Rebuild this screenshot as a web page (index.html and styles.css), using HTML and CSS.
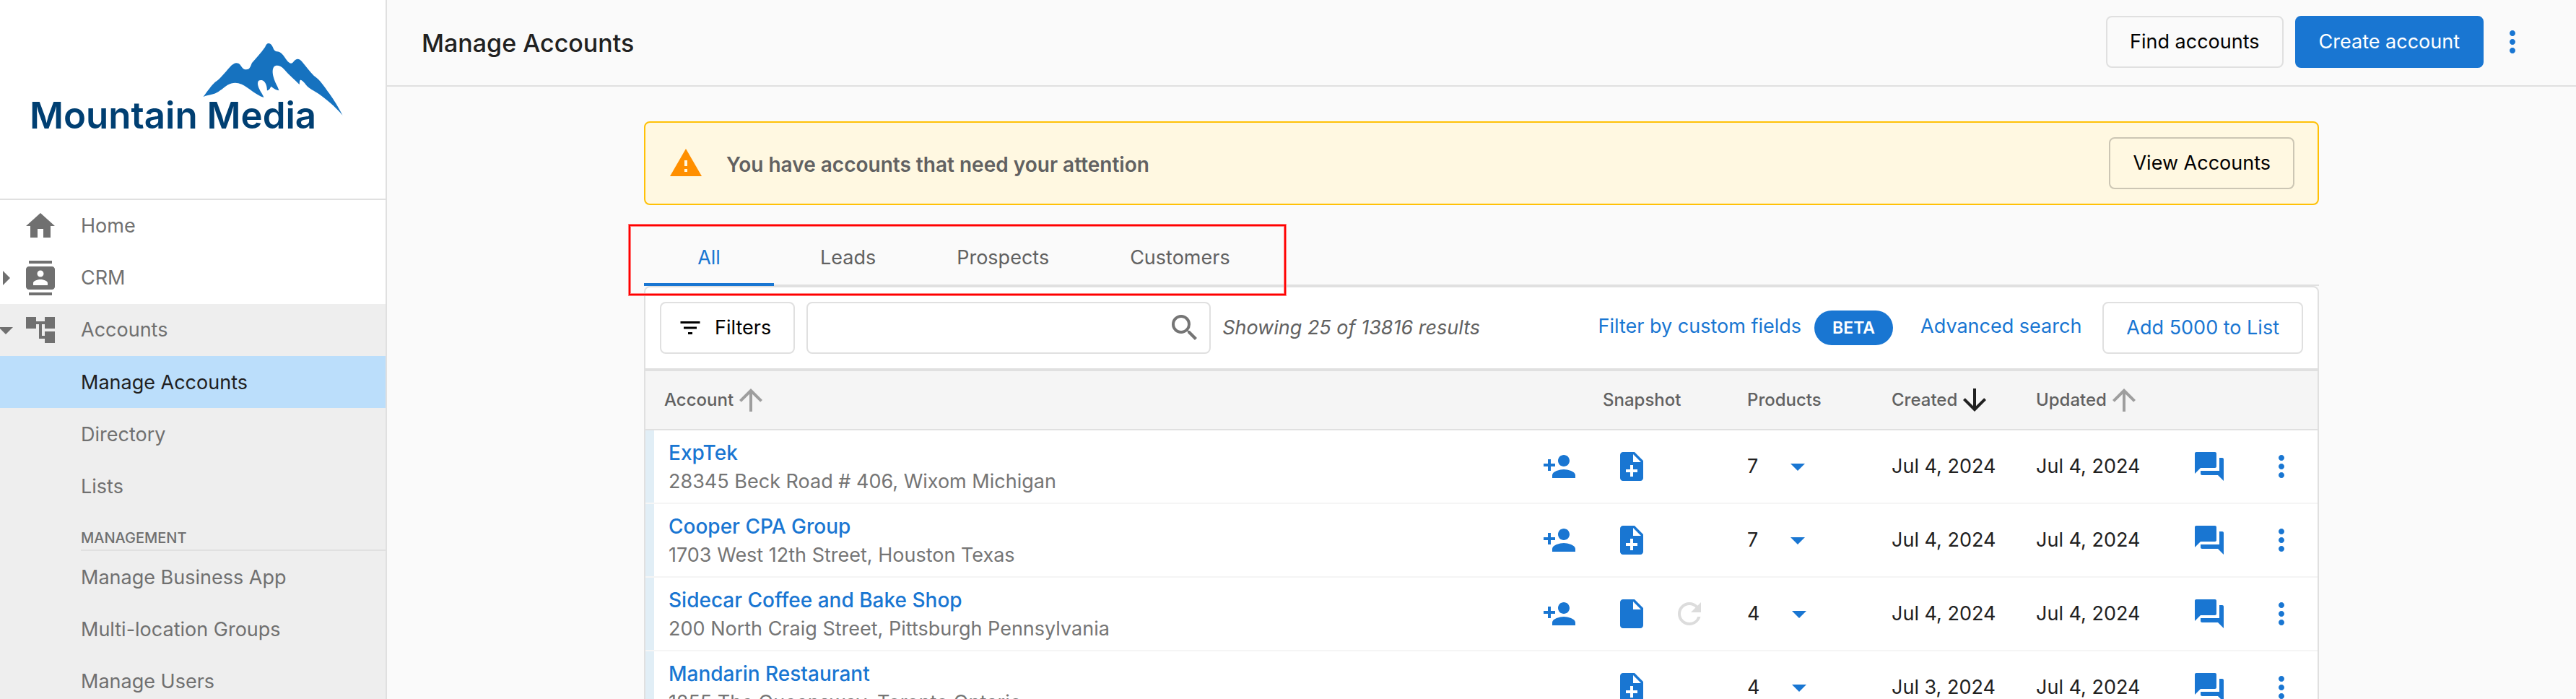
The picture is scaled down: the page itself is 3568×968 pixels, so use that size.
FILE: index.html
```html
<!DOCTYPE html>
<html lang="en">
<head>
<meta charset="utf-8">
<title>Manage Accounts</title>
<link rel="stylesheet" href="styles.css">
</head>
<body>
<svg class="sprite" aria-hidden="true">
  <symbol id="i-home" viewBox="0 0 24 24"><path d="M10 20v-6h4v6h5v-8h3L12 3 2 12h3v8z"/></symbol>
  <symbol id="i-contacts" viewBox="0 0 24 24"><path d="M20 0H4v2h16V0zM4 24h16v-2H4v2zM20 4H4c-1.100 0-2 .9-2 2v12c0 1.100.9 2 2 2h16c1.100 0 2-.9 2-2V6c0-1.100-.9-2-2-2zm-8 2.750c1.240 0 2.250 1.010 2.250 2.250s-1.010 2.250-2.250 2.250S9.750 10.240 9.750 9 10.760 6.750 12 6.750zM17 17H7v-1.500c0-1.670 3.330-2.500 5-2.500s5 .83 5 2.500V17z"/></symbol>
  <symbol id="i-tree" viewBox="0 0 24 24"><path d="M22 11V3h-7v3H9V3H2v8h7V8h2v10h4v3h7v-8h-7v3h-2V8h2v3z"/></symbol>
  <symbol id="i-right" viewBox="0 0 24 24"><path d="M10 17l5-5-5-5z"/></symbol>
  <symbol id="i-down" viewBox="0 0 24 24"><path d="M7 10l5 5 5-5z"/></symbol>
  <symbol id="i-more" viewBox="0 0 24 24"><path d="M12 8c1.100 0 2-.9 2-2s-.9-2-2-2-2 .9-2 2 .9 2 2 2zm0 2c-1.100 0-2 .9-2 2s.9 2 2 2 2-.9 2-2-.9-2-2-2zm0 6c-1.100 0-2 .9-2 2s.9 2 2 2 2-.9 2-2-.9-2-2-2z"/></symbol>
  <symbol id="i-warning" viewBox="0 0 24 24"><path d="M1 21h22L12 2 1 21z"/><path fill="#fff8e1" d="M13 18h-2v-2h2zM13 14h-2v-4h2z"/></symbol>
  <symbol id="i-filter" viewBox="0 0 24 24"><path d="M10 18h4v-2h-4v2zM3 6v2h18V6H3zm3 7h12v-2H6v2z"/></symbol>
  <symbol id="i-search" viewBox="0 0 24 24"><path d="M15.500 14h-.79l-.28-.27A6.471 6.471 0 0 0 16 9.500 6.500 6.500 0 1 0 9.500 16c1.610 0 3.090-.59 4.230-1.570l.27.28v.79l5 4.990L20.490 19l-4.990-5zm-6 0C7.010 14 5 11.990 5 9.500S7.010 5 9.500 5 14 7.010 14 9.500 11.990 14 9.500 14z"/></symbol>
  <symbol id="i-arrow-up" viewBox="0 0 24 24"><path d="M4 12l1.410 1.410L11 7.830V20h2V7.830l5.580 5.590L20 12l-8-8-8 8z"/></symbol>
  <symbol id="i-arrow-down" viewBox="0 0 24 24"><path d="M20 12l-1.410-1.410L13 16.170V4h-2v12.170l-5.580-5.590L4 12l8 8 8-8z"/></symbol>
  <symbol id="i-person-add" viewBox="0 0 24 24"><path d="M15 12c2.210 0 4-1.790 4-4s-1.790-4-4-4-4 1.790-4 4 1.790 4 4 4zm-9-2V7H4v3H1v2h3v3h2v-3h3v-2H6zm9 4c-2.670 0-8 1.340-8 4v2h16v-2c0-2.660-5.330-4-8-4z"/></symbol>
  <symbol id="i-note-add" viewBox="0 0 24 24"><path d="M14 2H6c-1.100 0-1.990.9-1.990 2L4 20c0 1.100.89 2 1.990 2H18c1.100 0 2-.9 2-2V8l-6-6zm2 14h-3v3h-2v-3H8v-2h3v-3h2v3h3v2zm-3-7V3.500L18.500 9H13z"/></symbol>
  <symbol id="i-file" viewBox="0 0 24 24"><path d="M6 2c-1.100 0-1.990.9-1.990 2L4 20c0 1.100.89 2 1.990 2H18c1.100 0 2-.9 2-2V8l-6-6H6zm7 7V3.500L18.500 9H13z"/></symbol>
  <symbol id="i-refresh" viewBox="0 0 24 24"><path d="M17.650 6.350A7.958 7.958 0 0 0 12 4c-4.420 0-7.990 3.580-7.990 8s3.570 8 7.990 8c3.730 0 6.840-2.550 7.730-6h-2.080A5.990 5.990 0 0 1 12 18c-3.310 0-6-2.690-6-6s2.690-6 6-6c1.660 0 3.140.69 4.220 1.780L13 11h7V4l-2.350 2.350z"/></symbol>
  <symbol id="i-chat" viewBox="0 0 24 24"><path d="M21 6h-2v9H6v2c0 .55.45 1 1 1h11l4 4V7c0-.55-.45-1-1-1zm-4 6V3c0-.55-.45-1-1-1H3c-.55 0-1 .45-1 1v14l4-4h10c.55 0 1-.45 1-1z"/></symbol>
</svg>

<div class="app">
  <aside class="sidebar">
    <div class="brand">
      <svg class="brand-logo" viewBox="0 0 534 275" role="img" aria-label="Mountain Media">
        <g transform="scale(.3444 .3333)" fill="#1672bf">
          <path d="M818 401C835 378 850 355 865 341C888 326 905 300 925 278C940 262 953 256 966 269C974 282 980 289 990 289C1004 289 1007 279 1013 262C1030 241 1048 223 1066 196C1072 180 1081 175 1092 187C1100 198 1100 212 1112 214C1132 214 1140 232 1153 250C1164 265 1174 268 1181 256C1190 243 1202 241 1213 254C1230 274 1246 298 1262 314C1288 332 1305 361 1324 388C1345 418 1362 448 1378 479C1346 441 1311 412 1283 391C1262 376 1245 371 1230 352C1219 337 1208 328 1206 335C1204 342 1205 346 1204 351C1185 331 1163 312 1142 287C1129 272 1113 268 1103 276C1092 288 1096 314 1107 341C1113 354 1119 365 1122 376C1112 374 1103 370 1090 359C1085 370 1082 374 1074 376C1074 353 1066 336 1052 333C1037 331 1035 342 1038 356C1043 376 1056 389 1061 405C1028 394 1002 365 972 350C952 341 934 342 915 353C892 370 878 384 857 391C842 396 829 396 818 402Z"/>
        </g>
        <text class="brand-text" x="41" y="178">Mountain Media</text>
      </svg>
    </div>
    <nav class="nav">
      <a class="nav-item" href="#"><span class="nav-toggle"></span><svg class="icon"><use href="#i-home"/></svg><span>Home</span></a>
      <a class="nav-item" href="#"><svg class="icon nav-toggle"><use href="#i-right"/></svg><svg class="icon"><use href="#i-contacts"/></svg><span>CRM</span></a>
      <div class="nav-group">
        <a class="nav-item" href="#"><svg class="icon nav-toggle"><use href="#i-down"/></svg><svg class="icon"><use href="#i-tree"/></svg><span>Accounts</span></a>
        <a class="nav-item nav-sub active" href="#">Manage Accounts</a>
        <a class="nav-item nav-sub" href="#">Directory</a>
        <a class="nav-item nav-sub" href="#">Lists</a>
        <h2 class="nav-heading">MANAGEMENT</h2>
        <a class="nav-item nav-sub" href="#">Manage Business App</a>
        <a class="nav-item nav-sub" href="#">Multi-location Groups</a>
        <a class="nav-item nav-sub" href="#">Manage Users</a>
      </div>
    </nav>
  </aside>

  <div class="page">
    <header class="topbar">
      <h1 class="title">Manage Accounts</h1>
      <button class="btn" type="button">Find accounts</button>
      <button class="btn btn-primary" type="button">Create account</button>
      <button class="icon-btn" type="button" aria-label="More actions"><svg class="icon"><use href="#i-more"/></svg></button>
    </header>

    <main class="content">
      <section class="alert">
        <svg class="icon alert-icon"><use href="#i-warning"/></svg>
        <p class="alert-text">You have accounts that need your attention</p>
        <button class="btn" type="button">View Accounts</button>
      </section>

      <div class="tabs" role="tablist">
        <button class="tab selected" type="button" role="tab" aria-selected="true">All</button>
        <button class="tab" type="button" role="tab">Leads</button>
        <button class="tab" type="button" role="tab">Prospects</button>
        <button class="tab" type="button" role="tab">Customers</button>
        <div class="highlight"></div>
      </div>

      <section class="card">
        <div class="toolbar">
          <button class="btn btn-filter" type="button"><svg class="icon"><use href="#i-filter"/></svg>Filters</button>
          <label class="search">
            <input type="text" aria-label="Search accounts">
            <svg class="icon"><use href="#i-search"/></svg>
          </label>
          <em class="count">Showing 25 of 13816 results</em>
          <div class="links">
            <a href="#">Filter by custom fields</a>
            <span class="badge">BETA</span>
            <a href="#">Advanced search</a>
          </div>
          <button class="btn btn-link" type="button">Add 5000 to List</button>
        </div>
        <table class="accounts">
          <colgroup><col><col class="c-icon"><col class="c-data"><col class="c-data"><col class="c-data"><col class="c-data"><col class="c-icon"><col class="c-more"></colgroup>
          <thead>
            <tr>
              <th><span class="sort">Account<svg class="icon"><use href="#i-arrow-up"/></svg></span></th>
              <th></th>
              <th>Snapshot</th>
              <th>Products</th>
              <th><span class="sort sorted">Created<svg class="icon"><use href="#i-arrow-down"/></svg></span></th>
              <th><span class="sort">Updated<svg class="icon"><use href="#i-arrow-up"/></svg></span></th>
              <th></th>
              <th></th>
            </tr>
          </thead>
          <tbody>
            <tr>
              <td><div class="account"><a href="#">ExpTek</a><span>28345 Beck Road # 406, Wixom Michigan</span></div></td>
              <td><button class="icon-btn" type="button" aria-label="Add user"><svg class="icon"><use href="#i-person-add"/></svg></button></td>
              <td><button class="icon-btn" type="button" aria-label="Create snapshot"><svg class="icon"><use href="#i-note-add"/></svg></button></td>
              <td><button class="products" type="button">7<svg class="icon"><use href="#i-down"/></svg></button></td>
              <td>Jul 4, 2024</td>
              <td>Jul 4, 2024</td>
              <td><button class="icon-btn" type="button" aria-label="Messages"><svg class="icon"><use href="#i-chat"/></svg></button></td>
              <td><button class="icon-btn" type="button" aria-label="More"><svg class="icon"><use href="#i-more"/></svg></button></td>
            </tr>
            <tr>
              <td><div class="account"><a href="#">Cooper CPA Group</a><span>1703 West 12th Street, Houston Texas</span></div></td>
              <td><button class="icon-btn" type="button" aria-label="Add user"><svg class="icon"><use href="#i-person-add"/></svg></button></td>
              <td><button class="icon-btn" type="button" aria-label="Create snapshot"><svg class="icon"><use href="#i-note-add"/></svg></button></td>
              <td><button class="products" type="button">7<svg class="icon"><use href="#i-down"/></svg></button></td>
              <td>Jul 4, 2024</td>
              <td>Jul 4, 2024</td>
              <td><button class="icon-btn" type="button" aria-label="Messages"><svg class="icon"><use href="#i-chat"/></svg></button></td>
              <td><button class="icon-btn" type="button" aria-label="More"><svg class="icon"><use href="#i-more"/></svg></button></td>
            </tr>
            <tr>
              <td><div class="account"><a href="#">Sidecar Coffee and Bake Shop</a><span>200 North Craig Street, Pittsburgh Pennsylvania</span></div></td>
              <td><button class="icon-btn" type="button" aria-label="Add user"><svg class="icon"><use href="#i-person-add"/></svg></button></td>
              <td><div class="snapshot"><button class="icon-btn" type="button" aria-label="View snapshot"><svg class="icon"><use href="#i-file"/></svg></button><button class="icon-btn muted" type="button" aria-label="Refresh snapshot"><svg class="icon"><use href="#i-refresh"/></svg></button></div></td>
              <td><button class="products" type="button">4<svg class="icon"><use href="#i-down"/></svg></button></td>
              <td>Jul 4, 2024</td>
              <td>Jul 4, 2024</td>
              <td><button class="icon-btn" type="button" aria-label="Messages"><svg class="icon"><use href="#i-chat"/></svg></button></td>
              <td><button class="icon-btn" type="button" aria-label="More"><svg class="icon"><use href="#i-more"/></svg></button></td>
            </tr>
            <tr>
              <td><div class="account"><a href="#">Mandarin Restaurant</a><span>1255 The Queensway, Toronto Ontario</span></div></td>
              <td></td>
              <td><button class="icon-btn" type="button" aria-label="Create snapshot"><svg class="icon"><use href="#i-note-add"/></svg></button></td>
              <td><button class="products" type="button">4<svg class="icon"><use href="#i-down"/></svg></button></td>
              <td>Jul 3, 2024</td>
              <td>Jul 4, 2024</td>
              <td><button class="icon-btn" type="button" aria-label="Messages"><svg class="icon"><use href="#i-chat"/></svg></button></td>
              <td><button class="icon-btn" type="button" aria-label="More"><svg class="icon"><use href="#i-more"/></svg></button></td>
            </tr>
          </tbody>
        </table>
      </section>
    </main>
  </div>
</div>
</body>
</html>
```
FILE: styles.css
```css
* { box-sizing: border-box; }

body {
  margin: 0;
  font-family: Inter, "Liberation Sans", sans-serif;
  font-size: 27px;
  line-height: 40px;
  color: #212121;
  background: #fafafa;
}

h1, h2, p { margin: 0; }
a { color: #1976d2; text-decoration: none; }
button, input { font: inherit; color: inherit; }
button { cursor: pointer; }

.sprite { display: none; }
.icon { display: block; flex: none; width: 48px; height: 48px; fill: currentColor; }

.app { display: flex; height: 100vh; overflow: hidden; }

/* Sidebar */
.sidebar {
  flex: none;
  width: 536px;
  overflow: hidden;
  background: #fff;
  border-right: 2px solid #e0e0e0;
}
.brand { border-bottom: 2px solid #e0e0e0; }
.brand-logo { display: block; width: 100%; }
.brand-text { font-family: Inter, sans-serif; font-size: 51px; font-weight: 600; fill: #003f72; }

.nav-group { background: #eee; }
.nav-item {
  display: flex;
  align-items: center;
  height: 72px;
  color: #707070;
}
.nav-item .icon + span { margin-left: 32px; }
.nav-toggle { flex: none; width: 48px; margin-left: -16px; }
.nav-sub { padding: 2px 0 0 112px; }
.nav-sub.active { color: #212121; background: #bbdefb; }
.nav-heading {
  margin-left: 112px;
  padding: 20px 0 0;
  border-bottom: 2px solid #e0e0e0;
  font-size: 20px;
  line-height: 32px;
  font-weight: 500;
  color: #707070;
}

/* Top bar */
.page { flex: 1; min-width: 0; }
.topbar {
  display: flex;
  align-items: center;
  gap: 16px;
  padding: 22px 64px 24px 48px;
  border-bottom: 2px solid #e0e0e0;
}
.title { flex: 1; padding-top: 4px; font-size: 34px; font-weight: 500; }

.btn {
  display: flex;
  align-items: center;
  height: 72px;
  padding: 0 31px;
  border: 2px solid #e0e0e0;
  border-radius: 8px;
  color: #000;
  background: transparent;
  white-space: nowrap;
}
.btn-primary { color: #fff; background: #1976d2; border-color: #1976d2; }
.btn-link { color: #1976d2; }
.icon-btn { display: block; padding: 0; border: 0; background: none; color: #1976d2; }

/* Alert */
.content { width: 2320px; max-width: 100%; margin: 0 auto; padding-top: 48px; }
.alert {
  display: flex;
  align-items: center;
  padding: 20px 32px;
  border: 2px solid #ffc107;
  border-radius: 8px;
  background: #fff8e1;
}
.alert-icon { color: #ff8f00; }
.alert-text {
  flex: 1;
  margin-left: 32px;
  padding-top: 4px;
  font-size: 28px;
  font-weight: 600;
  color: #616161;
}
.alert .btn { border-color: #ccc6b4; }

/* Tabs */
.tabs {
  position: relative;
  display: flex;
  gap: 16px;
  height: 80px;
  margin-top: 32px;
  border-bottom: 2px solid #e0e0e0;
}
.tab {
  height: 80px;
  padding: 6px 48px 0;
  border: 0;
  border-bottom: 4px solid transparent;
  background: none;
  color: #616161;
}
.tab.selected { min-width: 180px; color: #1976d2; border-color: #1976d2; }
.highlight {
  position: absolute;
  top: -5px;
  left: -21px;
  width: 910px;
  height: 98px;
  border: 2px solid #f00;
  box-shadow: 0 0 0 1px #ff8080, inset 0 0 0 1px #ff8080;
  pointer-events: none;
}

/* Accounts card */
.card { border: 2px solid #e0e0e0; border-radius: 8px 8px 0 0; background: #fff; }
.toolbar {
  display: flex;
  align-items: center;
  gap: 16px;
  padding: 20px;
  border-bottom: 4px solid #e0e0e0;
}
.btn-filter { gap: 16px; padding-left: 22px; }
.btn-filter .icon { width: 36px; height: 36px; }
.search {
  display: flex;
  align-items: center;
  flex: 0 1 560px;
  height: 72px;
  padding: 0 10px;
  border: 2px solid #e0e0e0;
  border-radius: 8px;
  color: #757575;
}
.search input { flex: 1; min-width: 0; border: 0; outline: 0; background: none; }
.count { flex: 1; white-space: nowrap; color: #616161; }
.links { display: flex; align-items: center; margin-right: 13px; white-space: nowrap; }
.links a { padding-bottom: 4px; }
.badge {
  margin: 0 38px 0 18px;
  padding: 0 25px;
  border-radius: 24px;
  font-size: 23px;
  line-height: 48px;
  font-weight: 600;
  color: #fff;
  background: #1976d2;
}

.accounts { width: 100%; table-layout: fixed; border-collapse: separate; border-spacing: 0; }
.c-icon { width: 100px; }
.c-data { width: 200px; }
.c-more { width: 90px; }
.accounts th, .accounts td { padding: 0; text-align: left; white-space: nowrap; }
.accounts th {
  height: 82px;
  border-bottom: 2px solid #e0e0e0;
  font-size: 24px;
  font-weight: 500;
  color: #616161;
  background: #f5f5f5;
}
.accounts th:first-child { padding-left: 26px; }
.sort { display: flex; align-items: center; }
.sort .icon { color: #9e9e9e; }
.sorted .icon { color: #212121; }
.accounts td { height: 102px; border-bottom: 2px solid #f5f5f5; }
.account {
  display: flex;
  flex-direction: column;
  justify-content: center;
  height: 100px;
  padding: 2px 0 0 20px;
  border-left: 12px solid #e1eef6;
  color: #757575;
}
.account a { font-size: 28px; font-weight: 500; }
.accounts .icon-btn { margin-left: 16px; }
.snapshot { display: flex; gap: 16px; }
.accounts .muted { color: #dcdcdc; }
.products {
  display: flex;
  align-items: center;
  gap: 31px;
  padding: 0;
  border: 0;
  background: none;
}
.products .icon { color: #1976d2; }
```
